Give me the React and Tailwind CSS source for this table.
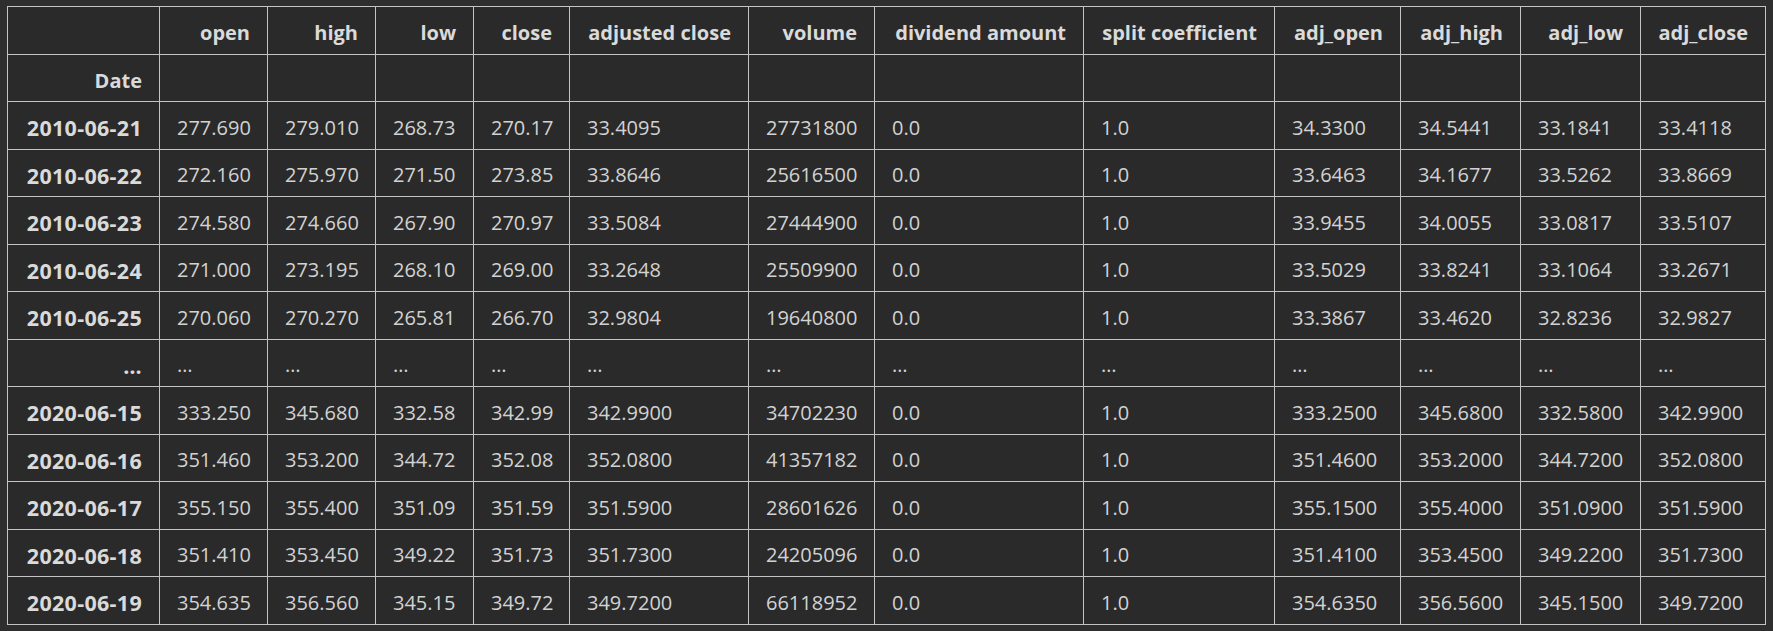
import React from "react";

const columns = [
  { name: "open", width: 108 },
  { name: "high", width: 108 },
  { name: "low", width: 98 },
  { name: "close", width: 96 },
  { name: "adjusted close", width: 179 },
  { name: "volume", width: 126 },
  { name: "dividend amount", width: 209 },
  { name: "split coefficient", width: 191 },
  { name: "adj_open", width: 126 },
  { name: "adj_high", width: 120 },
  { name: "adj_low", width: 120 },
  { name: "adj_close", width: 125 },
];

const rows = [
  ["2010-06-21", "277.690", "279.010", "268.73", "270.17", "33.4095", "27731800", "0.0", "1.0", "34.3300", "34.5441", "33.1841", "33.4118"],
  ["2010-06-22", "272.160", "275.970", "271.50", "273.85", "33.8646", "25616500", "0.0", "1.0", "33.6463", "34.1677", "33.5262", "33.8669"],
  ["2010-06-23", "274.580", "274.660", "267.90", "270.97", "33.5084", "27444900", "0.0", "1.0", "33.9455", "34.0055", "33.0817", "33.5107"],
  ["2010-06-24", "271.000", "273.195", "268.10", "269.00", "33.2648", "25509900", "0.0", "1.0", "33.5029", "33.8241", "33.1064", "33.2671"],
  ["2010-06-25", "270.060", "270.270", "265.81", "266.70", "32.9804", "19640800", "0.0", "1.0", "33.3867", "33.4620", "32.8236", "32.9827"],
  ["…", "…", "…", "…", "…", "…", "…", "…", "…", "…", "…", "…", "…"],
  ["2020-06-15", "333.250", "345.680", "332.58", "342.99", "342.9900", "34702230", "0.0", "1.0", "333.2500", "345.6800", "332.5800", "342.9900"],
  ["2020-06-16", "351.460", "353.200", "344.72", "352.08", "352.0800", "41357182", "0.0", "1.0", "351.4600", "353.2000", "344.7200", "352.0800"],
  ["2020-06-17", "355.150", "355.400", "351.09", "351.59", "351.5900", "28601626", "0.0", "1.0", "355.1500", "355.4000", "351.0900", "351.5900"],
  ["2020-06-18", "351.410", "353.450", "349.22", "351.73", "351.7300", "24205096", "0.0", "1.0", "351.4100", "353.4500", "349.2200", "351.7300"],
  ["2020-06-19", "354.635", "356.560", "345.15", "349.72", "349.7200", "66118952", "0.0", "1.0", "354.6350", "356.5600", "345.1500", "349.7200"],
];

const cell = "border border-[#c4c4c4] px-[17px] pt-[5px] pb-0 align-middle whitespace-nowrap";

export default function App() {
  return (
    <div className="min-h-screen w-full bg-[#2e2e2e] pl-[7px] pt-[6px] font-['Open_Sans',sans-serif] text-[20px] leading-none">
      <table className="table-fixed border-collapse bg-[#2a2a2a] text-[#d2d2d2] w-[1758px]">
        <colgroup>
          <col className="w-[152px]" />
          {columns.map((c) => (
            <col key={c.name} style={{ width: c.width }} />
          ))}
        </colgroup>
        <thead>
          <tr className="h-[48px]">
            <th className={cell} />
            {columns.map((c) => (
              <th key={c.name} className={`${cell} text-right font-bold text-[#dadada]`}>
                {c.name}
              </th>
            ))}
          </tr>
          <tr className="h-[47px]">
            <th className={`${cell} text-right font-bold text-[#dadada]`}>Date</th>
            {columns.map((c) => (
              <th key={c.name} className={cell} />
            ))}
          </tr>
        </thead>
        <tbody>
          {rows.map((r) => (
            <tr key={r[0] + r[1]} className="h-[47.5px]">
              <th className={`${cell} text-right font-bold text-[21.5px] tracking-[0.3px] text-[#dadada]`}>{r[0]}</th>
              {r.slice(1).map((v, i) => (
                <td key={i} className={`${cell} text-left font-normal`}>
                  {v}
                </td>
              ))}
            </tr>
          ))}
        </tbody>
      </table>
    </div>
  );
}
